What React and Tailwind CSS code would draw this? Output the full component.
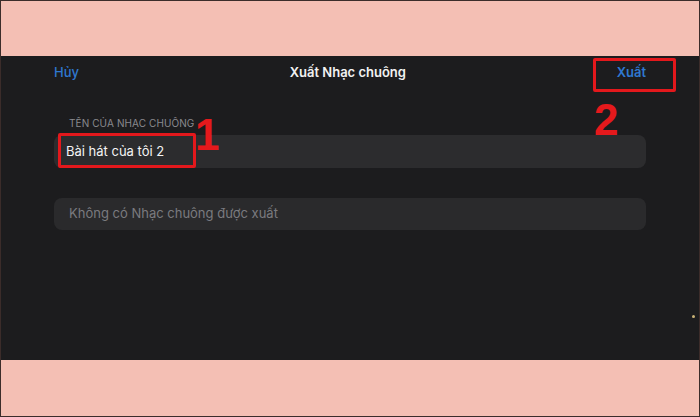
import React from "react";

const font = { fontFamily: "Inter, 'Liberation Sans', sans-serif" };

function Header() {
  return (
    <div className="h-[34px] flex items-center justify-between px-[53px] text-[13px]">
      <button className="text-[#2f78d0] font-medium">Hủy</button>
      <div className="text-[#f2f2f2] font-semibold">Xuất Nhạc chuông</div>
      <button className="text-[#2f78d0] font-semibold">Xuất</button>
    </div>
  );
}

// red marks drawn on top of the screenshot
function Annotations() {
  const digit =
    "absolute text-[44px] leading-none font-bold text-[#e5191c] font-['Liberation_Sans',sans-serif]";
  return (
    <>
      <div className="absolute left-[57px] top-[132px] w-[138px] h-[35px] border-[3px] border-[#e3181c] rounded-[2px]" />
      <div className={`${digit} left-[194px] top-[112px]`}>1</div>
      <div className="absolute left-[592px] top-[57px] w-[83px] h-[34px] border-[3px] border-[#e3181c] rounded-[2px]" />
      <div className={`${digit} left-[593px] top-[97px]`}>2</div>
      <div className="absolute left-[691px] top-[314px] w-[3px] h-[3px] rounded-full bg-[#c9b377]" />
    </>
  );
}

export default function App() {
  return (
    <div
      className="relative w-[700px] h-[417px] border border-[#3b2c2a] bg-[#f4bfb4] flex flex-col"
      style={font}
    >
      <div className="h-[55px] shrink-0" />
      <div className="h-[304px] shrink-0 bg-[#1c1c1e]">
        <Header />
        <div className="px-[53px] pt-[26px]">
          <div className="pl-[15px] text-[10px] uppercase text-[#8a8a8f] tracking-[0.1px]">
            Tên của nhạc chuông
          </div>
          <div className="mt-[4px] h-[33px] rounded-lg bg-[#2c2c2e] flex items-center pl-[12px] text-[13px] text-[#f4f4f4]">
            Bài hát của tôi 2
          </div>
          <div className="mt-[30px] h-[32px] rounded-lg bg-[#2a2a2c] flex items-center pl-[15px] text-[13px] text-[#7a7a7f]">
            Không có Nhạc chuông được xuất
          </div>
        </div>
      </div>
      <div className="flex-1" />
      <Annotations />
    </div>
  );
}
